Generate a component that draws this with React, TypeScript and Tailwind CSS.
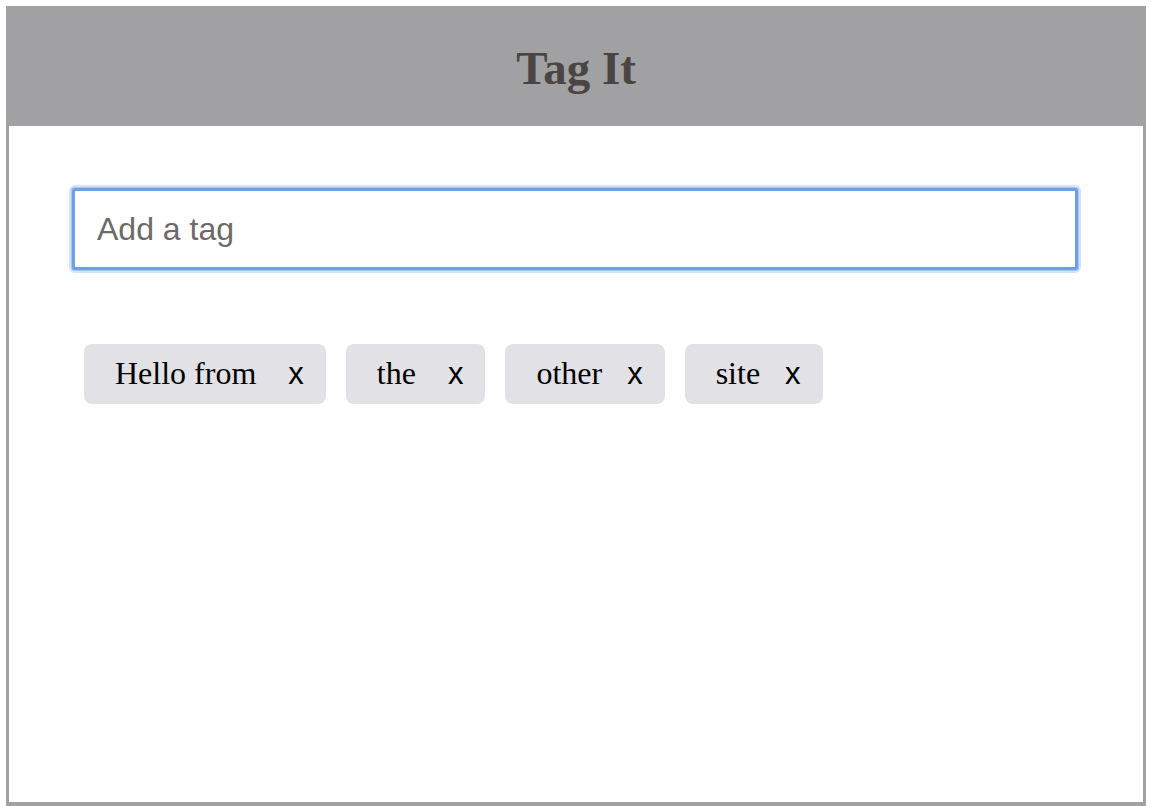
import React from "react";

const tags: { t: string; gap: string }[] = [
  { t: "Hello from", gap: "ml-[32px]" },
  { t: "the", gap: "ml-[32px]" },
  { t: "other", gap: "ml-[25px]" },
  { t: "site", gap: "ml-[25px]" },
];

export default function App() {
  return (
    <div className="w-[1152px] h-[806px] bg-white pt-[6px] pl-[6px] pr-[6px]">
      <div className="h-[800px] flex flex-col">
        <div className="h-[120px] bg-[#a1a1a3] flex items-center justify-center">
          <h1 className="text-[47px] font-bold text-[#4a4443] leading-none font-['Liberation_Serif',serif] pt-[5px]">
            Tag It
          </h1>
        </div>
        <div className="flex-1 border-b-[4px] border-x-[3px] border-[#a1a1a3] pl-[63px] pr-[65px] pt-[62px]">
          <input
            placeholder="Add a tag"
            className="block w-full h-[82px] border-[3px] border-[#6f9fe6] rounded-[3px] bg-white px-[22px] text-[32px] text-[#333] placeholder:text-[#6e6968] font-['Liberation_Sans',Arial,sans-serif] outline-none shadow-[0_0_0_1px_#a6c6f4,0_0_0_3px_#d3e3fa]"
          />
          <div className="flex mt-[74px] ml-[2px]">
            {tags.map(({ t, gap }) => (
              <div
                key={t}
                className="mx-[10px] h-[60px] flex items-center pl-[31px] pr-[22px] rounded-[8px] bg-[#e2e1e6]"
              >
                <div className="flex items-baseline pb-[3px]">
                  <span className="text-[32px] text-black font-['Liberation_Serif',serif] leading-none">
                    {t}
                  </span>
                  <span className={`${gap} text-[31px] text-black font-['Liberation_Sans',Arial,sans-serif] leading-none`}>
                    x
                  </span>
                </div>
              </div>
            ))}
          </div>
        </div>
      </div>
    </div>
  );
}
